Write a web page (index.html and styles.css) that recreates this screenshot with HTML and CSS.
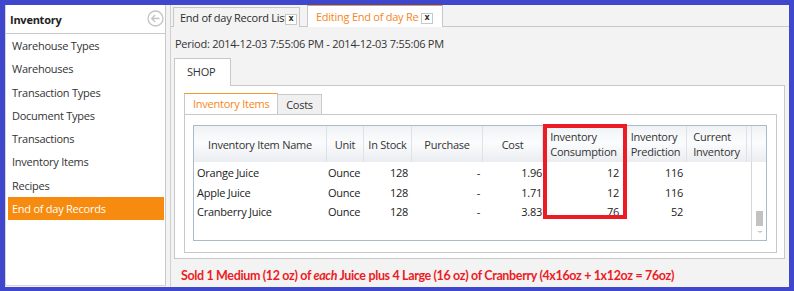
FILE: index.html
```html
<!DOCTYPE html>
<html lang="en">
<head>
<meta charset="utf-8">
<title>Inventory - End of day Records</title>
<link rel="stylesheet" href="styles.css">
</head>
<body>
<div class="frame">
  <aside class="sidebar">
    <div class="side-head">
      <span class="side-title">Inventory</span>
      <svg class="collapse" width="17" height="17" viewBox="0 0 17 17">
        <circle cx="8.5" cy="8.5" r="7.5" fill="none" stroke="#c4c4c4" stroke-width="1.3"/>
        <path d="M12.5 8.5H4.8M8.2 5L4.7 8.5L8.2 12" fill="none" stroke="#c4c4c4" stroke-width="1.3"/>
      </svg>
    </div>
    <ul class="menu">
      <li>Warehouse Types</li>
      <li>Warehouses</li>
      <li>Transaction Types</li>
      <li>Document Types</li>
      <li>Transactions</li>
      <li>Inventory Items</li>
      <li>Recipes</li>
      <li class="active">End of day Records</li>
    </ul>
  </aside>
  <main class="main">
    <div class="doc-tabs">
      <div class="doc-tab">
        <span class="doc-title">End of day Record List</span>
        <span class="close">x</span>
      </div>
      <div class="doc-tab active">
        <span class="doc-title">Editing End of day Record</span>
        <span class="close">x</span>
      </div>
    </div>
    <div class="period">Period: 2014-12-03 7:55:06 PM - 2014-12-03 7:55:06 PM</div>
    <div class="shop-tabs"><div class="shop-tab">SHOP</div></div>
    <div class="shop-panel">
      <div class="sub-tabs">
        <div class="sub-tab active">Inventory Items</div>
        <div class="sub-tab">Costs</div>
      </div>
      <div class="sub-panel">
        <div class="grid">
          <div class="grid-head">
            <div class="hcell">Inventory Item Name</div>
            <div class="hcell">Unit</div>
            <div class="hcell">In Stock</div>
            <div class="hcell">Purchase</div>
            <div class="hcell">Cost</div>
            <div class="hcell"><span class="two">Inventory<br>Consumption</span></div>
            <div class="hcell"><span class="two">Inventory<br>Prediction</span></div>
            <div class="hcell"><span class="two">Current<br>Inventory</span></div>
            <div class="hcell"></div>
            <div class="hcell last"></div>
          </div>
          <div class="grid-body">
            <div class="rows">
              <div class="row">
                <div class="cell name">Orange Juice</div>
                <div class="cell unit">Ounce</div>
                <div class="cell num stock">128</div>
                <div class="cell num purchase">-</div>
                <div class="cell num cost">1.96</div>
                <div class="cell num cons">12</div>
                <div class="cell num pred">116</div>
                <div class="cell num"></div>
              </div>
              <div class="row">
                <div class="cell name">Apple Juice</div>
                <div class="cell unit">Ounce</div>
                <div class="cell num stock">128</div>
                <div class="cell num purchase">-</div>
                <div class="cell num cost">1.71</div>
                <div class="cell num cons">12</div>
                <div class="cell num pred">116</div>
                <div class="cell num"></div>
              </div>
              <div class="row">
                <div class="cell name">Cranberry Juice</div>
                <div class="cell unit">Ounce</div>
                <div class="cell num stock">128</div>
                <div class="cell num purchase">-</div>
                <div class="cell num cost">3.83</div>
                <div class="cell num cons">76</div>
                <div class="cell num pred">52</div>
                <div class="cell num"></div>
              </div>
            </div>
            <div class="vscroll">
              <div class="thumb"></div>
              <div class="arrow"></div>
            </div>
          </div>
          <div class="highlight"></div>
        </div>
      </div>
    </div>
    <div class="note">Sold 1 Medium (12 oz) of <em>each</em> Juice plus 4 Large (16 oz) of Cranberry (4x16oz + 1x12oz = 76oz)</div>
  </main>
</div>
</body>
</html>
```

FILE: styles.css
```css
* { box-sizing: border-box; }

html, body {
  margin: 0;
  padding: 0;
}

body {
  background: #3f48cc;
  font-family: "Open Sans", "Noto Sans", sans-serif;
  font-size: 11px;
  letter-spacing: -0.25px;
  color: #2b2b2b;
  width: 794px;
  height: 291px;
  overflow: hidden;
}

.frame {
  margin: 5px 5px 0 5px;
  height: 282px;
  display: flex;
  background: #f3f3f3;
}

/* Sidebar */
.sidebar {
  width: 161px;
  height: 281px;
  background: #fff;
  border-left: 1px solid #d4d4d4;
  border-right: 1px solid #c8c8c8;
  border-bottom: 1px solid #d4d4d4;
  flex-shrink: 0;
}

.side-head {
  height: 29px;
  border-bottom: 1px solid #c8c8c8;
  display: flex;
  align-items: center;
  justify-content: space-between;
  padding: 0 1px 0 4px;
}

.side-title {
  font-weight: 700;
  color: #222;
}

.collapse { display: block; margin-top: -1px; }

.menu {
  list-style: none;
  margin: 0;
  padding: 0;
}

.menu li {
  height: 23.3px;
  line-height: 23.3px;
  padding-left: 4px;
  margin: 0 1px 0 2px;
  color: #333;
}

.menu li.active {
  background: #f68b10;
  color: #fff;
  padding-left: 4px;
}

/* Main area */
.main {
  flex: 1;
  margin-left: 4px;
  border-left: 1px solid #d0d0d0;
  display: flex;
  flex-direction: column;
  min-width: 0;
}

.doc-tabs {
  height: 22px;
  border-bottom: 1px solid #c8c8c8;
  display: flex;
  align-items: flex-end;
  padding-left: 2px;
  gap: 7px;
}

.doc-tab {
  position: relative;
  height: 20px;
  width: 127px;
  border: 1px solid #c8c8c8;
  border-bottom: none;
  background: #f3f3f3;
  margin-bottom: -1px;
  padding-left: 6px;
  display: flex;
  align-items: center;
  overflow: hidden;
}

.doc-tab.active {
  height: 22px;
  width: 136px;
  background: #fff;
  border-top: 1px solid #f39a2e;
  padding-left: 8px;
  color: #f7861c;
}

.doc-title {
  white-space: nowrap;
  overflow: hidden;
  width: 105px;
  flex-shrink: 0;
}

.doc-tab.active .doc-title { width: 103px; }

.close {
  position: absolute;
  right: 2px;
  top: 6px;
  width: 12px;
  height: 11px;
  border: 1px solid #c8c8c8;
  background: #fff;
  color: #333;
  font-size: 8px;
  font-weight: 700;
  line-height: 8px;
  text-align: center;
  letter-spacing: 0;
  font-family: "DejaVu Sans", sans-serif;
}

.doc-tab.active .close { right: 9px; top: 7px; }

.period {
  margin-top: 9px;
  height: 16px;
  line-height: 16px;
  padding-left: 4px;
  color: #333;
}

.shop-tabs {
  margin-top: 6px;
  padding-left: 3px;
  display: flex;
}

.shop-tab {
  width: 57px;
  height: 28px;
  border: 1px solid #c8c8c8;
  border-bottom: none;
  background: #fff;
  padding-left: 12px;
  line-height: 26px;
  margin-bottom: -1px;
  position: relative;
  z-index: 1;
  color: #333;
}

.shop-panel {
  margin: 0 4px 0 3px;
  background: #fff;
  border: 1px solid #c8c8c8;
  padding: 7px 7px 5px 9px;
}

.sub-tabs {
  display: flex;
  align-items: flex-end;
}

.sub-tab {
  height: 20px;
  width: 44px;
  border: 1px solid #c8c8c8;
  border-bottom: none;
  border-left: none;
  background: #f0f0f0;
  text-align: center;
  line-height: 19px;
  color: #333;
}

.sub-tab.active {
  height: 21px;
  width: 94px;
  background: #fff;
  border-left: 1px solid #c8c8c8;
  border-top: 1px solid #f39a2e;
  color: #f7861c;
  text-align: left;
  padding-left: 8px;
}

.sub-panel {
  border: 1px solid #c8c8c8;
  padding: 10px 9px 11px 8px;
}

/* Grid */
.grid {
  position: relative;
  border: 1px solid #a9bacd;
  height: 116px;
  display: flex;
  flex-direction: column;
}

.grid-head,
.row {
  display: grid;
  grid-template-columns: 133px 37px 48px 71px 60px 82px 62px 60px 5px 14px;
}

.row {
  grid-template-columns: 133px 37px 48px 71px 60px 82px 62px 60px;
  height: 19.6px;
}

.grid-head {
  height: 36px;
  background: linear-gradient(#eff2f5, #fbfcfd 45%, #eaedf1);
}

.hcell {
  border-right: 1px solid #dde2e8;
  display: flex;
  align-items: center;
  justify-content: center;
  color: #333;
  white-space: nowrap;
}

.hcell.last { border-right: none; }

.two {
  text-align: left;
  line-height: 15px;
}

.grid-body {
  flex: 1;
  display: flex;
}

.rows {
  flex: 1;
  padding-top: 1px;
}

.cell {
  line-height: 19.6px;
  white-space: nowrap;
  color: #222;
}

.cell.name { padding-left: 3px; }
.cell.unit { padding-left: 1px; }
.cell.num { text-align: right; padding-right: 4px; }
.cell.purchase { padding-right: 3px; }
.cell.cost { padding-right: 1px; }
.cell.cons { padding-right: 6px; }

.vscroll {
  width: 15px;
  border-left: 1px solid #d6d6d6;
  position: relative;
}

.thumb {
  position: absolute;
  left: 4px;
  top: 49px;
  width: 7px;
  height: 15px;
  background: #c2c2c2;
}

.arrow {
  position: absolute;
  left: 5px;
  top: 69px;
  width: 0;
  height: 0;
  border-left: 3px solid transparent;
  border-right: 3px solid transparent;
  border-top: 2px solid #c8c8c8;
}

.highlight {
  position: absolute;
  left: 349px;
  top: -2px;
  width: 84px;
  height: 95px;
  border: 4px solid #ed1c24;
  pointer-events: none;
}

.note {
  margin-top: 8px;
  padding-left: 10px;
  height: 17px;
  line-height: 17px;
  font-family: Lato, "Open Sans", sans-serif;
  font-size: 12.5px;
  letter-spacing: -0.35px;
  font-weight: 700;
  color: #ed1c24;
  white-space: nowrap;
}

.note em { font-style: italic; }
```
